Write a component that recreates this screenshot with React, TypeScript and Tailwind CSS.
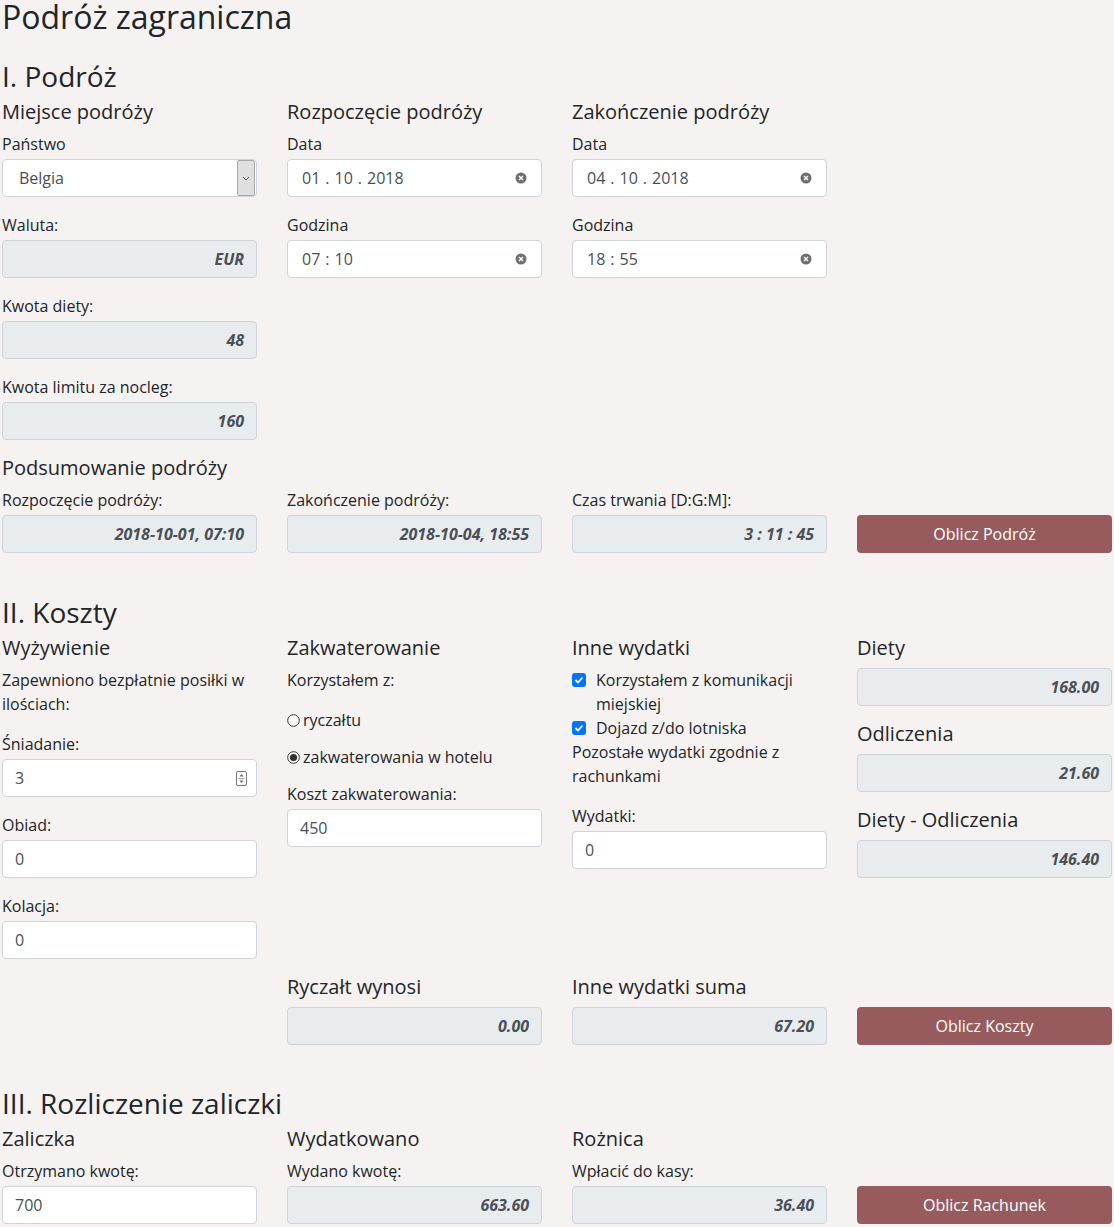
import React from "react";

/* ---------------- SMALL PIECES ---------------- */

function Label({ children }: { children: React.ReactNode }) {
  return <div className="text-base leading-6 mb-[3px]">{children}</div>;
}

function H5({ children }: { children: React.ReactNode }) {
  return <div className="text-[20px] leading-6 mb-2">{children}</div>;
}

function H3({ children, className = "" }: { children: React.ReactNode; className?: string }) {
  return <div className={`text-[28px] leading-[34px] mb-[7px] ${className}`}>{children}</div>;
}

function TextBox({ value, spinner }: { value: string; spinner?: boolean }) {
  return (
    <div className="h-[38px] bg-white border border-[#ced4da] rounded-[4px] pl-3 pr-2 flex items-center justify-between text-base text-[#495057]">
      <span>{value}</span>
      {spinner && <SpinIcon />}
    </div>
  );
}

function ReadOnly({ value }: { value: string }) {
  return (
    <div className="h-[38px] bg-[#e9ecef] border border-[#ced4da] rounded-[4px] px-3 flex items-center justify-end text-base italic font-bold text-[#495057]">
      {value}
    </div>
  );
}

function Segmented({ parts, sep }: { parts: string[]; sep: string }) {
  return (
    <div className="h-[38px] bg-white border border-[#ced4da] rounded-[4px] pl-[14px] pr-[14px] flex items-center justify-between text-base text-[#495057]">
      <span className="flex items-center">
        {parts.map((p, i) => (
          <React.Fragment key={i}>
            {i > 0 && <span className="mx-[5px]">{sep}</span>}
            <span>{p}</span>
          </React.Fragment>
        ))}
      </span>
      <ClearIcon />
    </div>
  );
}

function Select({ value }: { value: string }) {
  return (
    <div className="h-[38px] bg-white border border-[#ced4da] rounded-[4px] flex items-center text-base text-[#495057]">
      <span className="flex-1 pl-4">{value}</span>
      <div className="w-[18px] h-[36px] mr-[1px] bg-[#dfdfdf] border border-[#a9a9a9] rounded-[2px] flex items-center justify-center">
        <svg width="8" height="5" viewBox="0 0 8 5">
          <path d="M1 1l3 3 3-3" fill="none" stroke="#555" strokeWidth="1" />
        </svg>
      </div>
    </div>
  );
}

function Button({ children }: { children: React.ReactNode }) {
  return (
    <div className="mb-4">
      <button className="w-full h-[38px] bg-[#975b5d] text-white text-base rounded-[4px]">
        {children}
      </button>
    </div>
  );
}

function Field({ label, children }: { label: string; children: React.ReactNode }) {
  return (
    <div className="mb-4">
      <Label>{label}</Label>
      {children}
    </div>
  );
}

function Check({ children }: { children: React.ReactNode }) {
  return (
    <div className="flex items-start text-base leading-6">
      <span className="mt-[5px] w-[14px] h-[14px] shrink-0 rounded-[3px] bg-[#0075ff] flex items-center justify-center">
        <svg width="10" height="8" viewBox="0 0 10 8">
          <path d="M1.5 4l2.5 2.5 4.5-5" fill="none" stroke="#fff" strokeWidth="1.8" />
        </svg>
      </span>
      <span className="ml-[10px]">{children}</span>
    </div>
  );
}

function Radio({ checked, children }: { checked?: boolean; children: React.ReactNode }) {
  return (
    <div className="flex items-center text-base leading-6 mb-[13px]">
      <svg width="13" height="13" viewBox="0 0 13 13" className="mr-[3px]">
        <circle cx="6.5" cy="6.5" r="5.8" fill="#fff" stroke="#333" strokeWidth="1" />
        {checked && <circle cx="6.5" cy="6.5" r="3.6" fill="#333" />}
      </svg>
      <span>{children}</span>
    </div>
  );
}

function ClearIcon() {
  return (
    <svg width="12" height="12" viewBox="0 0 12 12">
      <circle cx="6" cy="6" r="5.5" fill="#6f6f6f" />
      <path d="M4 4l4 4M8 4l-4 4" stroke="#fff" strokeWidth="1.4" />
    </svg>
  );
}

function SpinIcon() {
  return (
    <svg width="11" height="15" viewBox="0 0 11 15" className="mr-[1px]">
      <rect x="0.5" y="0.5" width="10" height="14" rx="1.5" fill="#fff" stroke="#777" />
      <path d="M3.5 5.5L5.5 3l2 2.5z" fill="#666" />
      <path d="M3.5 9.5L5.5 12l2-2.5z" fill="#666" />
      <path d="M2.5 7.5h6" stroke="#999" />
    </svg>
  );
}

/* ---------------- PAGE ---------------- */

export default function App() {
  return (
    <div className="min-h-screen bg-[#f6f2f1] text-[#212529] font-['Open_Sans',sans-serif] px-[2px]">
      <div className="text-[32px] leading-[34px] mb-[25px]">Podróż zagraniczna</div>

      {/* I. PODRÓŻ */}
      <H3>I. Podróż</H3>
      <div className="grid grid-cols-4 gap-x-[30px] items-start">
        <div>
          <H5>Miejsce podróży</H5>
          <Field label="Państwo">
            <Select value="Belgia" />
          </Field>
          <Field label="Waluta:">
            <ReadOnly value="EUR" />
          </Field>
          <Field label="Kwota diety:">
            <ReadOnly value="48" />
          </Field>
          <Field label="Kwota limitu za nocleg:">
            <ReadOnly value="160" />
          </Field>
        </div>
        <div>
          <H5>Rozpoczęcie podróży</H5>
          <Field label="Data">
            <Segmented parts={["01", "10", "2018"]} sep="." />
          </Field>
          <Field label="Godzina">
            <Segmented parts={["07", "10"]} sep=":" />
          </Field>
        </div>
        <div>
          <H5>Zakończenie podróży</H5>
          <Field label="Data">
            <Segmented parts={["04", "10", "2018"]} sep="." />
          </Field>
          <Field label="Godzina">
            <Segmented parts={["18", "55"]} sep=":" />
          </Field>
        </div>
        <div />
      </div>

      <H5>Podsumowanie podróży</H5>
      <div className="grid grid-cols-4 gap-x-[30px] items-end">
        <Field label="Rozpoczęcie podróży:">
          <ReadOnly value="2018-10-01, 07:10" />
        </Field>
        <Field label="Zakończenie podróży:">
          <ReadOnly value="2018-10-04, 18:55" />
        </Field>
        <Field label="Czas trwania [D:G:M]:">
          <ReadOnly value="3 : 11 : 45" />
        </Field>
        <Button>Oblicz Podróż</Button>
      </div>

      {/* II. KOSZTY */}
      <H3 className="mt-[26px]">II. Koszty</H3>
      <div className="grid grid-cols-4 gap-x-[30px] items-start">
        <div>
          <H5>Wyżywienie</H5>
          <div className="text-base leading-6 mb-4">
            Zapewniono bezpłatnie posiłki w ilościach:
          </div>
          <Field label="Śniadanie:">
            <TextBox value="3" spinner />
          </Field>
          <Field label="Obiad:">
            <TextBox value="0" />
          </Field>
          <Field label="Kolacja:">
            <TextBox value="0" />
          </Field>
        </div>
        <div>
          <H5>Zakwaterowanie</H5>
          <div className="text-base leading-6 mb-4">Korzystałem z:</div>
          <Radio>ryczałtu</Radio>
          <Radio checked>zakwaterowania w hotelu</Radio>
          <Field label="Koszt zakwaterowania:">
            <TextBox value="450" />
          </Field>
        </div>
        <div>
          <H5>Inne wydatki</H5>
          <Check>Korzystałem z komunikacji miejskiej</Check>
          <Check>Dojazd z/do lotniska</Check>
          <div className="text-base leading-6 mb-4">
            Pozostałe wydatki zgodnie z rachunkami
          </div>
          <Field label="Wydatki:">
            <TextBox value="0" />
          </Field>
        </div>
        <div>
          <H5>Diety</H5>
          <div className="mb-4">
            <ReadOnly value="168.00" />
          </div>
          <H5>Odliczenia</H5>
          <div className="mb-4">
            <ReadOnly value="21.60" />
          </div>
          <H5>Diety - Odliczenia</H5>
          <div className="mb-4">
            <ReadOnly value="146.40" />
          </div>
        </div>
      </div>

      <div className="grid grid-cols-4 gap-x-[30px] items-end">
        <div />
        <div className="mb-4">
          <H5>Ryczałt wynosi</H5>
          <ReadOnly value="0.00" />
        </div>
        <div className="mb-4">
          <H5>Inne wydatki suma</H5>
          <ReadOnly value="67.20" />
        </div>
        <Button>Oblicz Koszty</Button>
      </div>

      {/* III. ROZLICZENIE ZALICZKI */}
      <H3 className="mt-[25px]">III. Rozliczenie zaliczki</H3>
      <div className="grid grid-cols-4 gap-x-[30px] items-end">
        <div className="mb-4">
          <H5>Zaliczka</H5>
          <Label>Otrzymano kwotę:</Label>
          <TextBox value="700" />
        </div>
        <div className="mb-4">
          <H5>Wydatkowano</H5>
          <Label>Wydano kwotę:</Label>
          <ReadOnly value="663.60" />
        </div>
        <div className="mb-4">
          <H5>Rożnica</H5>
          <Label>Wpłacić do kasy:</Label>
          <ReadOnly value="36.40" />
        </div>
        <Button>Oblicz Rachunek</Button>
      </div>
    </div>
  );
}
